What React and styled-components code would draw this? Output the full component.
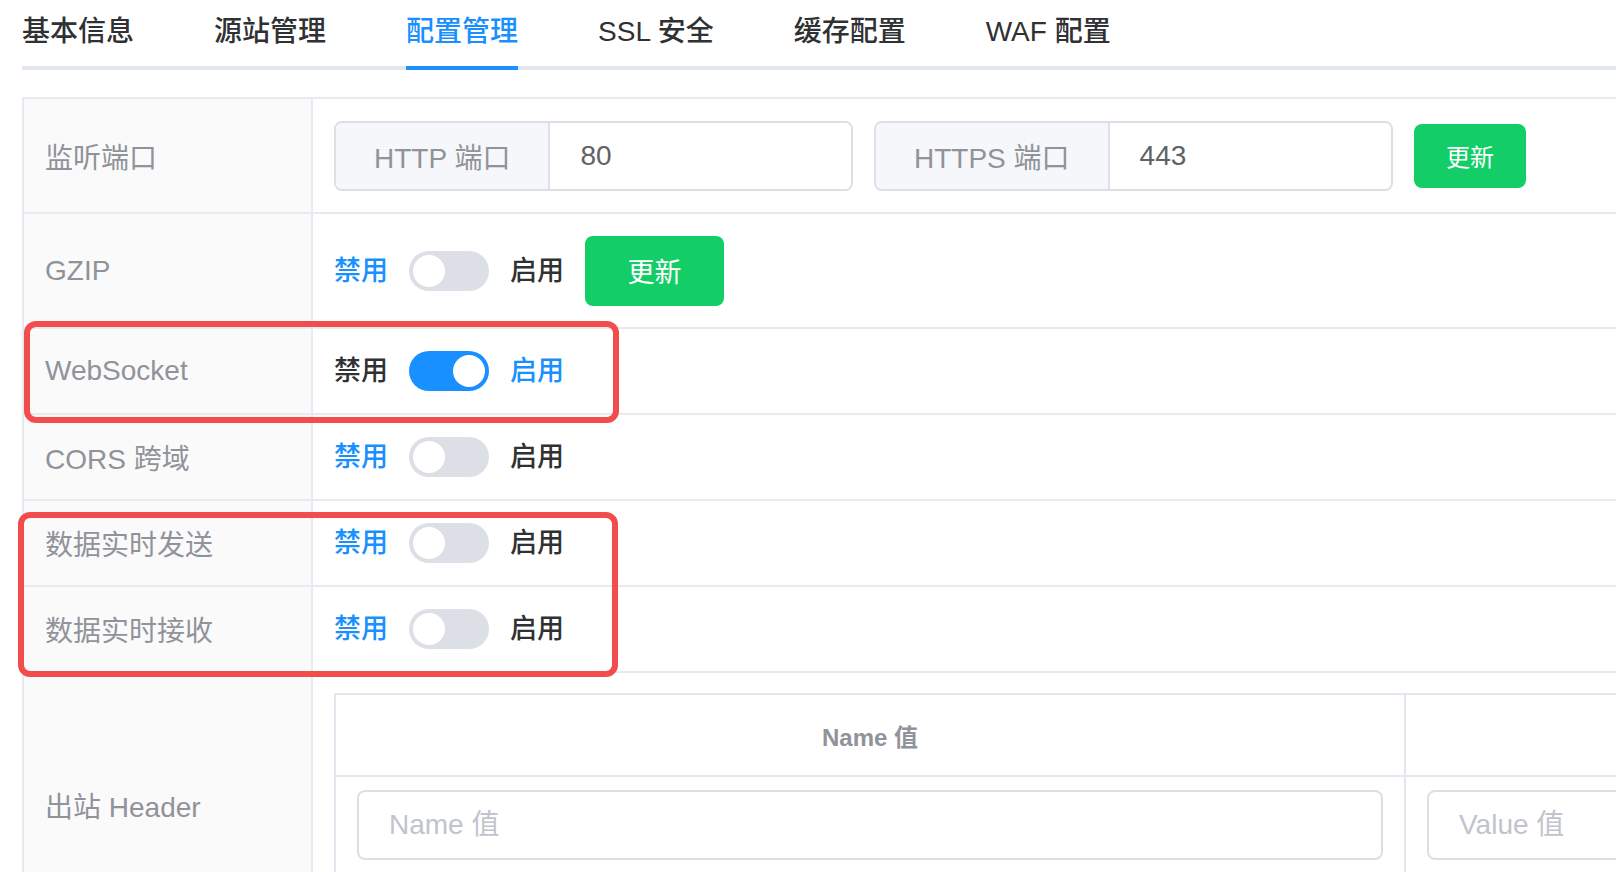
import React from "react";
import styled, { createGlobalStyle } from "styled-components";

const font = `"Liberation Sans", "Noto Sans CJK SC", sans-serif`;
const line = "#e6eaf2";

const GlobalStyle = createGlobalStyle`
    html, body {
        margin: 0;
        padding: 0;
        background: #fff;
        overflow: hidden;
    }
    body {
        font-family: ${font};
        width: 1616px;
        height: 872px;
    }
`;

function Switch({ on }) {
    return (
        <Track $on={on}>
            <Knob $on={on} />
        </Track>
    );
}

function Toggle({ on }) {
    return (
        <ToggleWrap>
            <SwitchText $active={!on}>禁用</SwitchText>
            <Switch on={on} />
            <SwitchText $active={on}>启用</SwitchText>
        </ToggleWrap>
    );
}

function PortInput({ label, value }) {
    return (
        <InputGroup>
            <Prepend>{label}</Prepend>
            <GroupInput defaultValue={value} />
        </InputGroup>
    );
}

const tabs = ["基本信息", "源站管理", "配置管理", "SSL 安全", "缓存配置", "WAF 配置"];

export default function App() {
    return (
        <Page>
            <GlobalStyle />
            <TabList>
                {tabs.map((t) => (
                    <Tab key={t}>
                        <TabLabel $active={t === "配置管理"}>{t}</TabLabel>
                    </Tab>
                ))}
            </TabList>

            <Table>
                <Row $h={113}>
                    <LabelCell>监听端口</LabelCell>
                    <ContentCell>
                        <PortInput label="HTTP 端口" value="80" />
                        <PortInput label="HTTPS 端口" value="443" />
                        <Button $size="small">更新</Button>
                    </ContentCell>
                </Row>
                <Row $h={113}>
                    <LabelCell>GZIP</LabelCell>
                    <ContentCell>
                        <Toggle on={false} />
                        <Button>更新</Button>
                    </ContentCell>
                </Row>
                <Row $h={84}>
                    <LabelCell>WebSocket</LabelCell>
                    <ContentCell>
                        <Toggle on />
                    </ContentCell>
                </Row>
                <Row $h={84}>
                    <LabelCell>CORS 跨域</LabelCell>
                    <ContentCell>
                        <Toggle on={false} />
                    </ContentCell>
                </Row>
                <Row $h={84}>
                    <LabelCell>数据实时发送</LabelCell>
                    <ContentCell>
                        <Toggle on={false} />
                    </ContentCell>
                </Row>
                <Row $h={84}>
                    <LabelCell>数据实时接收</LabelCell>
                    <ContentCell>
                        <Toggle on={false} />
                    </ContentCell>
                </Row>
                <Row $h={264}>
                    <LabelCell>出站 Header</LabelCell>
                    <ContentCell $top>
                        <HeaderTable>
                            <HeadCell>Name 值</HeadCell>
                            <HeadCell>Value 值</HeadCell>
                            <BodyCell>
                                <PlainInput placeholder="Name 值" />
                            </BodyCell>
                            <BodyCell>
                                <PlainInput placeholder="Value 值" />
                            </BodyCell>
                        </HeaderTable>
                    </ContentCell>
                </Row>
            </Table>

            <Highlight $left={24} $top={321} $w={595} $h={102} />
            <Highlight $left={18} $top={512} $w={600} $h={165} />
        </Page>
    );
}

const Page = styled.div`
    position: relative;
    padding-left: 22px;
    width: 2400px;
`;

const TabList = styled.div`
    display: flex;
    border-bottom: 4px solid #e2e6ee;
`;

const Tab = styled.div`
    padding: 0 40px;
    margin-bottom: -4px;
    &:first-child {
        padding-left: 0;
    }
`;

const TabLabel = styled.div`
    height: 66px;
    line-height: 63px;
    font-size: 28px;
    font-weight: 500;
    color: ${(p) => (p.$active ? "#1890ff" : "#303133")};
    border-bottom: 4px solid ${(p) => (p.$active ? "#1890ff" : "transparent")};
    white-space: nowrap;
`;

const Table = styled.div`
    margin-top: 27px;
    border-top: 2px solid ${line};
    border-left: 2px solid ${line};
`;

const Row = styled.div`
    display: grid;
    grid-template-columns: 289px 1fr;
    min-height: ${(p) => p.$h}px;
    border-bottom: 2px solid ${line};
`;

const LabelCell = styled.div`
    display: flex;
    align-items: center;
    padding: 0 21px;
    background: #fafafa;
    border-right: 2px solid ${line};
    font-size: 28px;
    color: #909399;
    white-space: nowrap;
`;

const ContentCell = styled.div`
    display: flex;
    align-items: ${(p) => (p.$top ? "flex-start" : "center")};
    gap: 21px;
    padding: ${(p) => (p.$top ? "20px 21px" : "0 21px")};
`;

const InputGroup = styled.div`
    display: flex;
    width: 519px;
    height: 70px;
    box-sizing: border-box;
    border: 2px solid #dcdfe6;
    border-radius: 8px;
    overflow: hidden;
`;

const Prepend = styled.div`
    display: flex;
    align-items: center;
    padding: 0 38px;
    background: #f5f7fa;
    border-right: 2px solid #dcdfe6;
    color: #909399;
    font-size: 28px;
    white-space: nowrap;
`;

const GroupInput = styled.input`
    flex: 1;
    min-width: 0;
    border: none;
    outline: none;
    padding: 0 30px;
    font-family: ${font};
    font-size: 28px;
    color: #606266;
    background: #fff;
`;

const Button = styled.button`
    border: none;
    outline: none;
    border-radius: 8px;
    background: #13ce66;
    color: #fff;
    font-family: ${font};
    font-size: ${(p) => (p.$size === "small" ? "24px" : "27px")};
    width: ${(p) => (p.$size === "small" ? "112px" : "139px")};
    height: ${(p) => (p.$size === "small" ? "64px" : "70px")};
    padding: 0;
    cursor: pointer;
`;

const ToggleWrap = styled.div`
    display: flex;
    align-items: center;
    gap: 21px;
`;

const SwitchText = styled.span`
    font-size: 27px;
    font-weight: 500;
    line-height: 40px;
    color: ${(p) => (p.$active ? "#1890ff" : "#303133")};
`;

const Track = styled.div`
    position: relative;
    width: 80px;
    height: 40px;
    border-radius: 20px;
    background: ${(p) => (p.$on ? "#1890ff" : "#dcdfe6")};
`;

const Knob = styled.div`
    position: absolute;
    top: 4px;
    left: ${(p) => (p.$on ? "44px" : "4px")};
    width: 32px;
    height: 32px;
    border-radius: 50%;
    background: #fff;
`;

const HeaderTable = styled.div`
    display: grid;
    grid-template-columns: 1070px 1070px;
    border-top: 2px solid #e2e6ee;
    border-left: 2px solid #e2e6ee;
`;

const HeadCell = styled.div`
    height: 80px;
    display: flex;
    align-items: center;
    justify-content: center;
    font-size: 24px;
    font-weight: 700;
    color: #909399;
    border-right: 2px solid #e2e6ee;
    border-bottom: 2px solid #e2e6ee;
`;

const BodyCell = styled.div`
    padding: 13px 21px;
    border-right: 2px solid #e2e6ee;
    border-bottom: 2px solid #e2e6ee;
`;

const PlainInput = styled.input`
    display: block;
    width: 100%;
    height: 70px;
    box-sizing: border-box;
    border: 2px solid #dcdfe6;
    border-radius: 8px;
    outline: none;
    padding: 0 30px;
    font-family: ${font};
    font-size: 28px;
    color: #606266;
    &::placeholder {
        color: #c0c4cc;
    }
`;

const Highlight = styled.div`
    position: absolute;
    left: ${(p) => p.$left}px;
    top: ${(p) => p.$top}px;
    width: ${(p) => p.$w}px;
    height: ${(p) => p.$h}px;
    box-sizing: border-box;
    border: 6px solid #f24c4c;
    border-radius: 12px;
    pointer-events: none;
`;
